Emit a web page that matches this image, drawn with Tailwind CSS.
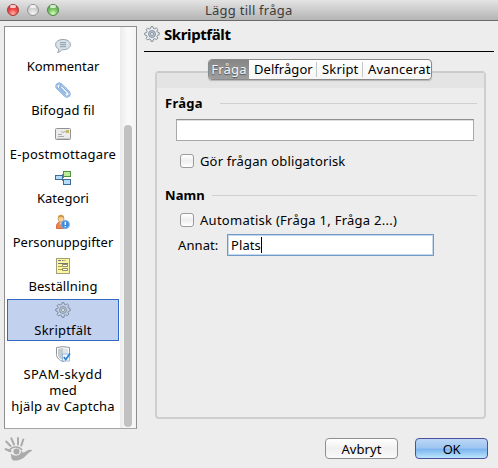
<!DOCTYPE html>
<html lang="sv">
<head>
<meta charset="utf-8">
<title>Lägg till fråga</title>
<script src="https://cdn.jsdelivr.net/npm/@tailwindcss/browser@4"></script>
</head>
<body class="w-[498px] h-[468px] overflow-hidden bg-[#ededed] font-['Noto_Sans','Open_Sans',sans-serif] text-[13px] leading-4 text-black flex flex-col">
<svg class="hidden">
  <defs>
    <linearGradient id="metal" x1="0" y1="0" x2="1" y2="1"><stop offset="0" stop-color="#e0e8ef"/><stop offset="1" stop-color="#94a4b3"/></linearGradient>
    <symbol id="gear" viewBox="0 0 16 16">
      <path fill="url(#metal)" stroke="#76838f" stroke-width=".9" stroke-linejoin="round" d="M7 .7h2l.5 1.8 1.2.4 1.500-1.100 1.700 1.600-1 1.500.5 1.200 1.800.5v2.200l-1.800.5-.5 1.200 1 1.600-1.600 1.500-1.600-1-1.200.5L9 15.300H7l-.5-1.800-1.300-.5-1.600 1-1.500-1.500 1-1.600-.5-1.300L.8 9V7l1.800-.5.5-1.300-1-1.500 1.500-1.600 1.600 1 1.300-.5z"/>
      <circle cx="8" cy="8" r="3.500" fill="#b5c2ce" stroke="#8290a0" stroke-width=".9"/>
      <circle cx="8" cy="8" r="1.500" fill="#f4f6f8" stroke="#7b8896" stroke-width=".8"/>
    </symbol>
  </defs>
</svg>
<header class="relative h-[21px] shrink-0 border-b border-[#6a6a6a] bg-gradient-to-b from-[#e4e4e4] to-[#b4b4b4] flex items-center pl-[7px] gap-2">
  <i class="size-3 rounded-full border border-[#a33b38] bg-[radial-gradient(circle_at_50%_85%,#ffb3a8_0%,#ee4a48_45%,#c9292c_100%)] flex justify-center"><b class="w-1.5 h-[3px] rounded-full bg-white/75"></b></i>
  <i class="size-3 rounded-full border border-[#959595] bg-[radial-gradient(circle_at_50%_85%,#f4f4f4_0%,#cfcfcf_55%,#b9b9b9_100%)] flex justify-center"><b class="w-1.5 h-[3px] rounded-full bg-white/75"></b></i>
  <i class="size-3 rounded-full border border-[#4d8446] bg-[radial-gradient(circle_at_50%_85%,#d5ffb9_0%,#7cc566_45%,#4b9c40_100%)] flex justify-center"><b class="w-1.5 h-[3px] rounded-full bg-white/75"></b></i>
  <h1 class="absolute left-[205px] top-[2px] text-[#3c3c3c] whitespace-nowrap tracking-[0.25px]">Lägg till fråga</h1>
</header>
<main class="flex h-[409px] shrink-0 pt-[5px] pl-1">
  <aside class="w-[133px] h-[403px] border border-[#8e8e8e] border-b-[#a5a5a5] bg-white flex">
    <ul class="w-[115px] pl-[2px] pt-2 flex flex-col gap-[2px] text-center whitespace-nowrap">
      <li class="w-[112px] h-[42px] pt-[3px] flex flex-col items-center gap-1">
        <svg class="size-4 shrink-0" viewBox="0 0 16 16"><path d="M8 1.500c4.300 0 7.400 2 7.400 5s-3 5.200-7 5.200L7 11.600c-1 1.500-2.300 2.500-4.500 2.800 1-1 1.300-2.100 1.200-3.300C1.700 10.100.6 8.500.6 6.500c0-3 3.200-5 7.400-5z" fill="#d7e1ea" stroke="#93a1ae"/><path d="M5 4.700h6M5 6.700h6M5 8.700h6" stroke="#8d9aa6"/></svg>
        <span class="tracking-[-0.05px]">Kommentar</span></li>
      <li class="w-[112px] h-[42px] pt-[3px] flex flex-col items-center gap-1">
        <svg class="size-4 shrink-0" viewBox="0 0 16 16" fill="none" stroke-linecap="round"><path d="M10.800 6.800 6.300 2.400C3.500-.1-.4 3.500 2.400 6.400l7 7c3.400 3 7-.4 4.200-3.700L8 4.200C6 2.500 4 4.500 5.600 6.400l5 5" stroke="#6f9fd5" stroke-width="1.900"/><path d="M10.800 6.800 6.300 2.400C3.500-.1-.4 3.500 2.400 6.400l7 7c3.400 3 7-.4 4.200-3.700L8 4.200C6 2.500 4 4.500 5.600 6.400l5 5" stroke="#c5dcf5" stroke-width=".7"/></svg>
        <span class="tracking-[0.15px]">Bifogad fil</span></li>
      <li class="w-[112px] h-[42px] pt-[3px] flex flex-col items-center gap-1">
        <svg class="size-4 shrink-0" viewBox="0 0 16 16"><rect x=".5" y="2.500" width="15" height="11" rx="1" fill="#ececec" stroke="#929292"/><path d="M1.500 12.500h13" stroke="#c9c9c9"/><rect x="11" y="4" width="3" height="3" fill="#c8b95a"/><path d="M6 6.500c1-2 2 1 3-.5s2 .5 2.500 0M3 8.500h4M3 10.500h6" fill="none" stroke="#9a9a9a" stroke-width=".8"/></svg>
        <span class="tracking-[0.25px]">E-postmottagare</span></li>
      <li class="w-[112px] h-[42px] pt-[3px] flex flex-col items-center gap-1">
        <svg class="size-4 shrink-0" viewBox="0 0 16 16"><path d="M6 7.500h3M7.500 4v7" stroke="#777"/><rect x=".5" y="5.500" width="7" height="4" fill="#b4dbf8" stroke="#3d6c98"/><rect x="8.500" y="1.500" width="7" height="5" fill="#bdeb9a" stroke="#4d943e"/><rect x="8.500" y="9.500" width="7" height="5" fill="#b4dbf8" stroke="#3d6c98"/></svg>
        <span class="tracking-[0px]">Kategori</span></li>
      <li class="w-[112px] h-[42px] pt-[3px] flex flex-col items-center gap-1">
        <svg class="size-4 shrink-0" viewBox="0 0 16 16"><path d="M1.500 14.500c-.5-4 1-6 3-6.500h3c2 .5 3.500 2.500 3 6.500z" fill="#f0824c" stroke="#c75a2e" stroke-width=".8"/><path d="M4.500 8.500 6 11l1.800-2.500z" fill="#fff0e0"/><circle cx="6" cy="5" r="3" fill="#f9cf9a" stroke="#c58d4b" stroke-width=".6"/><path d="M2.800 5C2.500 2 4 .8 6 .8S9.500 2 9.200 4.500C8 3.200 6 3 4 3.500z" fill="#cc9a45"/><circle cx="10.300" cy="10.500" r="4.200" fill="#3d8ee0" stroke="#8cb7e6" stroke-width=".9"/><path d="M10.300 7.800v3.300M10.300 12v1.300" stroke="#fff" stroke-width="1.400"/></svg>
        <span class="tracking-[0.05px]">Personuppgifter</span></li>
      <li class="w-[112px] h-[42px] pt-[3px] flex flex-col items-center gap-1">
        <svg class="size-4 shrink-0" viewBox="0 0 16 16"><rect x="1.500" y=".5" width="13" height="15" fill="#fbf6a0" stroke="#a1a07c"/><path d="M3 2.500h3M7 2.500h1.500M9.500 2.500h1" stroke="#777"/><path d="M3 5.500h10" stroke="#777"/><path d="M3 8.500h4M3 11.500h4" stroke="#aaa14a"/><path d="M7.500 6.500h5v2h-5zM7.500 10.500h5v2h-5z" fill="#fff" stroke="#77724b" stroke-width=".8"/></svg>
        <span class="tracking-[0.1px]">Beställning</span></li>
      <li class="w-[112px] h-[42px] pt-[2px] flex flex-col items-center gap-1 border border-[#3069c6] bg-[#c2d1ed]">
        <svg class="size-4 shrink-0"><use href="#gear"/></svg>
        <span class="tracking-[0.2px]">Skriptfält</span></li>
      <li class="w-[112px] pt-[3px] flex flex-col items-center">
        <svg class="size-4 shrink-0 mb-1" viewBox="0 0 16 16"><path d="M1.500 1.500 8 .6l6.500.9v7c0 3.500-3 5.700-6.500 7-3.500-1.300-6.500-3.500-6.500-7z" fill="#fff" stroke="#8d9499"/><path d="M3 2.800l5-.7v12c-3-1.200-5-3-5-5.800z" fill="#c5cacd"/><path d="M8 2.100l5 .7v5.500H8z" fill="#e2e5e7"/><rect x="7.500" y="8" width="7" height="7" fill="#f2f8ff" stroke="#8db0d3" stroke-width=".8"/><path d="m8.800 11 2 2.500L15 7.500" fill="none" stroke="#2f83ce" stroke-width="1.700"/></svg>
        <span class="tracking-[0.45px]">SPAM-skydd</span><span class="tracking-[0px]">med</span><span class="tracking-[0.2px]">hjälp av Captcha</span></li>
    </ul>
    <div class="w-4 bg-gradient-to-r from-[#ececec] via-[#fafafa] to-[#f4f4f4] pl-1 pt-[98px]"><div class="w-2 h-[302px] rounded-full bg-[#c1c1c1]"></div></div>
  </aside>
  <section class="pl-[7px] flex flex-col">
    <div class="w-[350px] h-[26px] border-b border-black flex items-start gap-1">
      <svg class="size-4 shrink-0"><use href="#gear"/></svg>
      <h2 class="text-[15px] leading-[17px] font-bold tracking-[-0.4px]">Skriptfält</h2>
    </div>
    <div class="relative ml-[11px] mt-[19px] w-[331px] h-[348px] rounded-[4px] border-2 border-[#cfcfcf] border-t-[#cbcbcb]">
      <div class="h-[15px] bg-[#e4e4e4]"></div>
      <nav class="absolute left-[51px] -top-[14px] w-[224px] h-[21px] rounded-[4px] border border-[#8b8b8b] bg-gradient-to-b from-white to-[#f6f6f6] shadow-[0_1px_1px_#b5b5b5] flex leading-[19px] whitespace-nowrap overflow-hidden">
        <span class="w-[40px] text-center text-[#f5f5f5] bg-gradient-to-b from-[#868686] to-[#9e9e9e] [text-shadow:0_1px_1px_#555] tracking-[0.2px]">Fråga</span>
        <span class="w-[67px] pl-[5px] tracking-[0.05px]">Delfrågor</span>
        <span class="w-[46px] my-[2px] leading-[15px] pl-[5px] border-l border-[#c6c6c6] tracking-[0.15px]">Skript</span>
        <span class="my-[2px] leading-[15px] pl-[5px] border-l border-[#c6c6c6] tracking-[0.2px]">Avancerat</span>
      </nav>
      <div class="pl-2 pr-[7px] pt-[7px] flex flex-col">
        <div class="flex items-center h-4"><h3 class="w-[55px] font-bold tracking-[0.25px]">Fråga</h3><hr class="flex-1 border-[#d0d0d0]"></div>
        <input aria-label="Fråga" class="ml-[11px] mt-2 w-[298px] h-[22px] bg-white border border-[#a9a9a9] border-t-[#8f8f8f] shadow-[inset_0_1px_0_#ddd] outline-none">
        <label class="ml-[15px] mt-3 flex items-center h-4 gap-[6px] whitespace-nowrap"><i class="size-[14px] rounded-[3px] border border-[#9b9b9b] bg-gradient-to-b from-white via-[#eeeeee] to-white"></i><span class="tracking-[0.15px]">Gör frågan obligatorisk</span></label>
        <div class="flex items-center h-4 mt-[18px]"><h3 class="w-[47px] font-bold tracking-[0.1px]">Namn</h3><hr class="flex-1 border-[#d0d0d0]"></div>
        <label class="ml-[15px] mt-[9px] flex items-center h-4 gap-[6px] whitespace-nowrap"><i class="size-[14px] rounded-[3px] border border-[#9b9b9b] bg-gradient-to-b from-white via-[#eeeeee] to-white"></i><span class="tracking-[0.27px]">Automatisk (Fråga 1, Fråga 2...)</span></label>
        <div class="ml-[13px] mt-[6px] flex items-center"><span class="w-[49px] -mt-px tracking-[0.1px]">Annat:</span>
          <div class="w-[207px] h-[22px] bg-white border border-[#6e9bc9] shadow-[inset_0_0_0_1px_#c6d9ec] flex items-center pl-[3px]"><span class="tracking-[0.1px]">Plats</span><i class="w-px h-4 bg-black"></i></div></div>
      </div>
    </div>
  </section>
</main>
<footer class="relative flex justify-end gap-[17px] pt-2 pr-[10px]">
  <svg class="absolute left-1 top-[6px]" width="29" height="26" viewBox="0 0 29 26"><g fill="none" stroke="#aaa" stroke-linecap="round"><path d="m6.500 10-4.300-4.500M10 8.500 7.300 2.300M14 8.500V2M17.300 9.500l2-6" stroke-width="2"/><path d="M1.800 13.200l4.500 1.800" stroke-width="2.300"/></g><path fill="none" stroke="#aaa" stroke-width="1.600" d="M4.500 15.500c3-5.500 10-6 13.500-1.500"/><circle cx="12.500" cy="15.500" r="3" fill="#aaa"/><path fill="#aaa" d="M17.500 13c.5 3.500 1.300 4 3 3.300 1.800-1.300 4-3.300 7-2.300.8.400.6 1-.2 1.300-3 1.200-5 4.700-8 6.700-3.500 2.300-8 3.300-10.800 2C7 23 7.500 20 6.500 17.500c3 2.500 7 3 9.500.5 1.300-1.500 1.500-3 1.500-5z"/></svg>
  <button class="w-[73px] h-[21px] rounded-[4px] border border-[#8f8f8f] bg-gradient-to-b from-white via-[#f0f0f0] to-[#fafafa] leading-[18px] tracking-[0.1px]">Avbryt</button>
  <button class="w-[73px] h-[21px] rounded-[4px] border border-[#4c509d] bg-[linear-gradient(#bdd7f5_0%,#9cc5f2_49%,#78b2ee_52%,#bce7fb_100%)] leading-[18px] tracking-[-0.3px]">OK</button>
</footer>
</body>
</html>
